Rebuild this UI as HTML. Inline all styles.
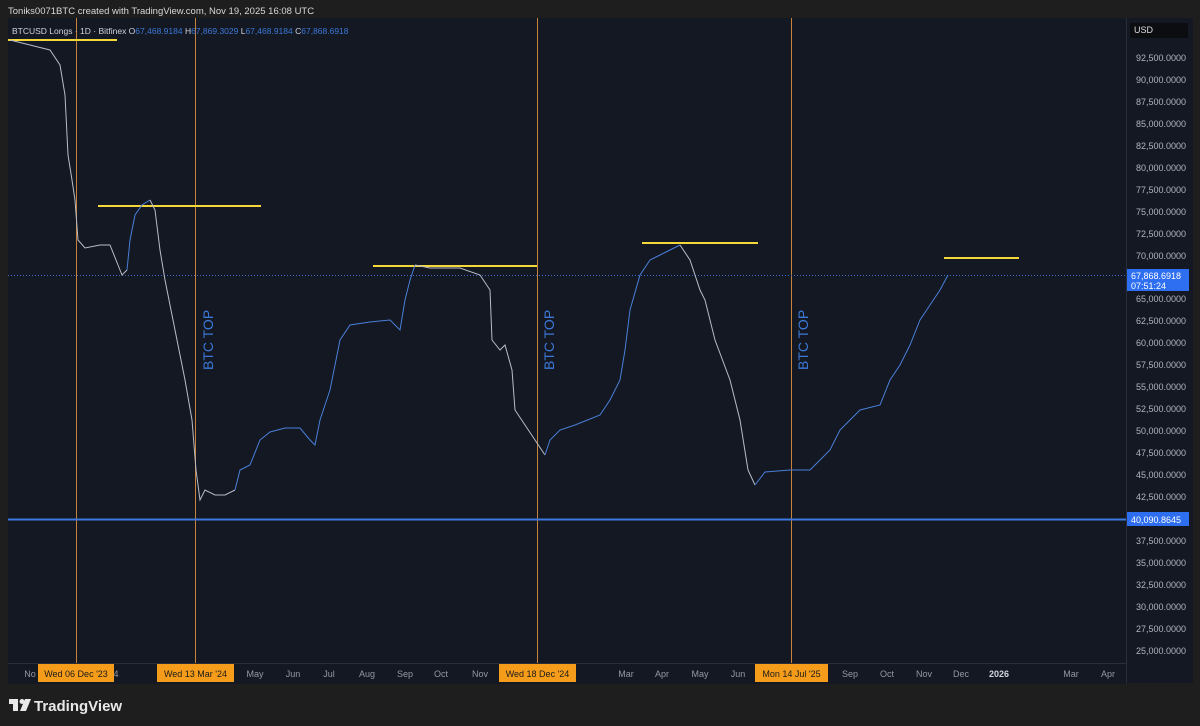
<!DOCTYPE html>
<html><head><meta charset="utf-8"><style>
html,body{margin:0;padding:0;background:#1e1e1f;width:1200px;height:726px;overflow:hidden;font-family:"Liberation Sans",sans-serif}
.t{position:absolute;white-space:nowrap}
.v{position:absolute;top:18px;width:1px;height:645px;background:#c8823a}
</style></head><body>
<div class="t" style="left:8px;top:6px;font-size:9.5px;color:#d8d8d8">Toniks0071BTC created with TradingView.com, Nov 19, 2025 16:08 UTC</div>
<div style="position:absolute;left:8px;top:18px;width:1118px;height:645px;background:#141823"></div>
<div style="position:absolute;left:1126px;top:18px;width:66px;height:665px;background:#141823;border-left:1px solid #2a2e39"></div>
<div style="position:absolute;left:8px;top:663px;width:1118px;height:20px;background:#141823;border-top:1px solid #2a2e39"></div>
<div class="t" style="left:1130px;top:23px;width:58px;height:15px;background:#0c0d10;color:#ddd;font-size:9px;line-height:15px;padding-left:4px;box-sizing:border-box">USD</div>
<div class="v" style="left:76px"></div><div class="v" style="left:195px"></div><div class="v" style="left:537px"></div><div class="v" style="left:791px"></div>
<svg width="1200" height="726" style="position:absolute;left:0;top:0" font-family="Liberation Sans, sans-serif">
<line x1="8" y1="275.5" x2="1126" y2="275.5" stroke="#3a6fd0" stroke-width="1" stroke-dasharray="1,2"/>
<line x1="8" y1="519.5" x2="1126" y2="519.5" stroke="#3b78e0" stroke-width="2"/>
<g stroke="#f5d73a" stroke-width="2"><line x1="8" y1="40" x2="117" y2="40"/><line x1="98" y1="206" x2="261" y2="206"/><line x1="373" y1="266" x2="537" y2="266"/><line x1="642" y1="243" x2="758" y2="243"/><line x1="944" y1="258" x2="1019" y2="258"/></g>
<polyline fill="none" stroke="#b8bcc6" stroke-width="1" points="10,40 30,45 50,50 60,65 65,95 68,155 72,180 75,200 78,240 85,248 100,245 110,245 118,265 122,275 127,270"/>
<polyline fill="none" stroke="#4a7fd8" stroke-width="1" points="127,270 130,240 135,215 142,205 150,200"/>
<polyline fill="none" stroke="#b8bcc6" stroke-width="1" points="150,200 155,210 160,250 165,280 175,330 185,380 192,420 196,470 200,500 205,490 215,495 225,495 235,490"/>
<polyline fill="none" stroke="#4a7fd8" stroke-width="1" points="235,490 240,470 250,465 260,440 270,432 285,428 300,428 310,440 315,445 320,420 330,390 340,340 350,325 370,322 390,320 400,330 405,300 410,280 415,265"/>
<polyline fill="none" stroke="#b8bcc6" stroke-width="1" points="415,265 430,268 460,268 480,275 490,290 492,340 500,350 505,345 512,370 515,410 525,425 535,440 545,455"/>
<polyline fill="none" stroke="#4a7fd8" stroke-width="1" points="545,455 550,440 560,430 575,425 600,415 610,400 620,380 625,350 630,310 640,275 650,260 660,255 670,250 680,245"/>
<polyline fill="none" stroke="#b8bcc6" stroke-width="1" points="680,245 690,260 700,290 705,300 715,340 730,380 740,420 748,470 755,485"/>
<polyline fill="none" stroke="#4a7fd8" stroke-width="1" points="755,485 765,472 790,470 810,470 820,460 830,450 840,430 860,410 880,405 890,380 900,365 910,345 920,320 930,305 940,290 948,275"/>
<g fill="#3b78d8" font-size="14"><text transform="translate(213,370) rotate(-90)">BTC TOP</text><text transform="translate(554,370) rotate(-90)">BTC TOP</text><text transform="translate(808,370) rotate(-90)">BTC TOP</text></g>
<g fill="#b2b5be" font-size="9" text-anchor="end">
<text x="1186" y="61">92,500.0000</text><text x="1186" y="83">90,000.0000</text><text x="1186" y="105">87,500.0000</text><text x="1186" y="127">85,000.0000</text><text x="1186" y="149">82,500.0000</text><text x="1186" y="171">80,000.0000</text><text x="1186" y="193">77,500.0000</text><text x="1186" y="215">75,000.0000</text><text x="1186" y="237">72,500.0000</text><text x="1186" y="259">70,000.0000</text><text x="1186" y="302">65,000.0000</text><text x="1186" y="324">62,500.0000</text><text x="1186" y="346">60,000.0000</text><text x="1186" y="368">57,500.0000</text><text x="1186" y="390">55,000.0000</text><text x="1186" y="412">52,500.0000</text><text x="1186" y="434">50,000.0000</text><text x="1186" y="456">47,500.0000</text><text x="1186" y="478">45,000.0000</text><text x="1186" y="500">42,500.0000</text><text x="1186" y="544">37,500.0000</text><text x="1186" y="566">35,000.0000</text><text x="1186" y="588">32,500.0000</text><text x="1186" y="610">30,000.0000</text><text x="1186" y="632">27,500.0000</text><text x="1186" y="654">25,000.0000</text>
</g>
<rect x="1127" y="269" width="62" height="22" fill="#2e6ef0"/>
<text x="1131" y="279" fill="#fff" font-size="9">67,868.6918</text><text x="1131" y="289" fill="#fff" font-size="9">07:51:24</text>
<rect x="1127" y="512" width="62" height="14" fill="#2e6ef0"/>
<text x="1131" y="523" fill="#fff" font-size="9">40,090.8645</text>
<g fill="#9598a1" font-size="9" text-anchor="middle">
<text x="30" y="677">No</text><text x="116" y="677">4</text><text x="255" y="677">May</text><text x="293" y="677">Jun</text><text x="329" y="677">Jul</text><text x="367" y="677">Aug</text><text x="405" y="677">Sep</text><text x="441" y="677">Oct</text><text x="480" y="677">Nov</text><text x="626" y="677">Mar</text><text x="662" y="677">Apr</text><text x="700" y="677">May</text><text x="738" y="677">Jun</text><text x="850" y="677">Sep</text><text x="887" y="677">Oct</text><text x="924" y="677">Nov</text><text x="961" y="677">Dec</text><text x="999" y="677" fill="#d1d4dc" font-weight="bold">2026</text><text x="1071" y="677">Mar</text><text x="1108" y="677">Apr</text>
</g>
<g font-size="9" text-anchor="middle" fill="#1a1a1a">
<rect x="38" y="664" width="76" height="18" fill="#f59d1a"/><text x="76" y="677">Wed 06 Dec '23</text>
<rect x="157" y="664" width="77" height="18" fill="#f59d1a"/><text x="195.5" y="677">Wed 13 Mar '24</text>
<rect x="499" y="664" width="77" height="18" fill="#f59d1a"/><text x="537.5" y="677">Wed 18 Dec '24</text>
<rect x="755" y="664" width="73" height="18" fill="#f59d1a"/><text x="791.5" y="677">Mon 14 Jul '25</text>
</g>
<text x="12" y="34" font-size="8.5" fill="#d1d4dc">BTCUSD Longs · 1D · Bitfinex  O<tspan fill="#3b78d8">67,468.9184</tspan>  H<tspan fill="#3b78d8">67,869.3029</tspan>  L<tspan fill="#3b78d8">67,468.9184</tspan>  C<tspan fill="#3b78d8">67,868.6918</tspan></text>
<g fill="#e8e8e8"><rect x="9" y="699" width="9" height="5"/><rect x="13" y="699" width="5" height="12"/><circle cx="22" cy="701.5" r="2.5"/><polygon points="25,699 31,699 26,711 20,711"/></g>
<text x="34" y="711" font-size="15" font-weight="bold" fill="#e8e8e8">TradingView</text>
</svg>
</body></html>
